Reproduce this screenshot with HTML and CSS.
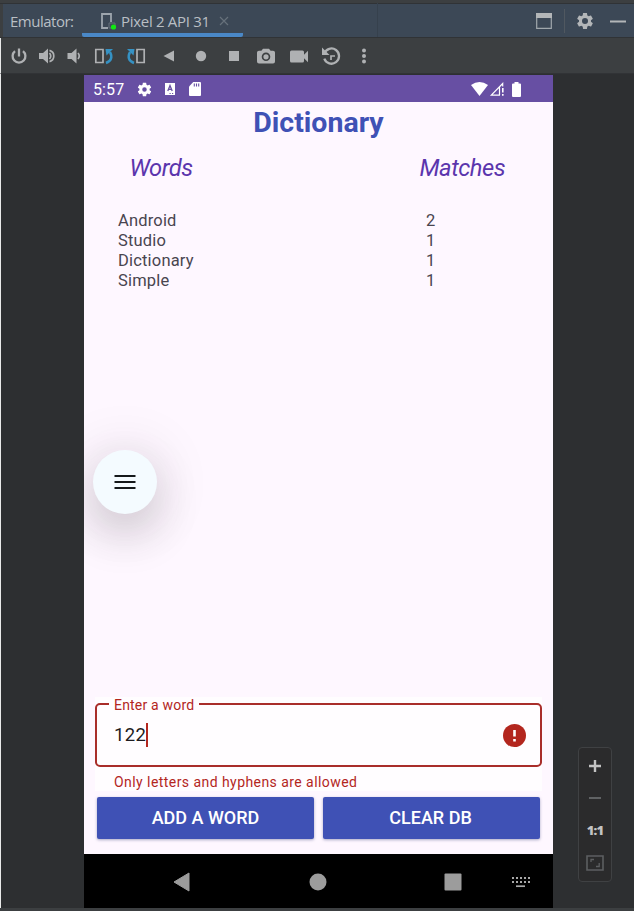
FILE: index.html
```html
<!DOCTYPE html>
<html lang="en">
<head>
<meta charset="utf-8">
<title>Emulator</title>
<link rel="stylesheet" href="styles.css">
</head>
<body>
<div class="window">
  <header class="tabbar">
    <span class="tool-name">Emulator:</span>
    <div class="tab">
      <svg class="device" width="17" height="18" viewBox="0 0 17 18"><path d="M8 16H2V2h9v8" fill="none" stroke="#9da5ad" stroke-width="1.800"/><path d="M9 11h6v5H9z" fill="none" stroke="#66717c"/><circle cx="13.500" cy="15" r="2.600" fill="#12e812"/></svg>
      <span class="tab-name">Pixel 2 API 31</span>
      <svg class="close" width="10" height="10" viewBox="0 0 10 10"><path d="m1 1 8 8M9 1 1 9" stroke="#66717b" stroke-width="1.200"/></svg>
    </div>
    <div class="tab-actions">
      <svg width="16" height="16" viewBox="0 0 16 16"><path d="M.7.700h14.600v14.600H.7z" fill="none" stroke="#a0a7ac" stroke-width="1.200"/><path d="M0 0h16v5H0z" fill="#b3b6b8"/></svg>
      <i class="divider"></i>
      <svg width="20" height="20" viewBox="0 0 24 24"><path fill="#b3b6b8" d="M19.140 12.940c.04-.3.060-.61.060-.94 0-.32-.02-.64-.07-.94l2.030-1.580c.18-.14.230-.41.120-.61l-1.920-3.320c-.12-.22-.37-.29-.59-.22l-2.390.960c-.5-.38-1.030-.7-1.620-.94L14.400 2.810c-.04-.24-.24-.41-.48-.41h-3.840c-.24 0-.43.170-.47.410L9.250 5.350c-.59.240-1.130.570-1.620.940l-2.390-.96c-.22-.08-.47 0-.59.220L2.740 8.870c-.12.210-.08.470.12.610l2.030 1.580c-.05.300-.09.630-.09.940s.02.640.07.940l-2.030 1.580c-.18.140-.23.410-.12.610l1.920 3.320c.12.220.370.290.590.220l2.390-.96c.5.380 1.030.7 1.620.94l.36 2.540c.05.240.24.410.480.410h3.840c.24 0 .44-.17.470-.41l.36-2.540c.59-.24 1.130-.56 1.620-.94l2.390.96c.22.080.470 0 .59-.22l1.920-3.320c.12-.22.070-.47-.12-.61zM12 15.600A3.600 3.600 0 1 1 12 8.400a3.600 3.600 0 0 1 0 7.200z"/></svg>
      <svg width="16" height="3" viewBox="0 0 16 3"><path d="M0 .5h16v2H0z" fill="#b3b6b8"/></svg>
    </div>
  </header>

  <nav class="toolbar">
    <svg width="18" height="18" viewBox="0 0 18 18"><path d="M5 4.200a6.400 6.400 0 1 0 8 0M9 1.500v8" class="line"/></svg>
    <svg width="18" height="18" viewBox="0 0 18 18"><path d="M1 6h4l5-4.500v15L5 12H1z"/><path d="M11.500 6q2.500 3 0 6M11.500 3.400a5.800 5.800 0 0 1 0 11.200" class="line thin"/></svg>
    <svg width="18" height="18" viewBox="0 0 18 18"><path d="M2.500 6h4l5-4.500v15l-5-4.500h-4z"/><path d="M13 6q2.500 3 0 6" class="line thin"/></svg>
    <svg width="20" height="18" viewBox="0 0 20 18"><path d="M1.800 2.500H9v13H1.800z" class="line thin"/><path d="M12 16c5.500-2 6.500-6 4-11" class="turn"/><path d="M11.500 2h7.500l-6.500 6.500z" class="turn-tip"/></svg>
    <svg width="20" height="18" viewBox="0 0 20 18"><path d="M11 2.500h7.200v13H11z" class="line thin"/><path d="M8 16c-5.500-2-6.500-6-4-11" class="turn"/><path d="M8.500 2H1l6.500 6.500z" class="turn-tip"/></svg>
    <svg width="18" height="18" viewBox="0 0 18 18"><path d="M14 3.500v11L3.500 9z"/></svg>
    <svg width="18" height="18" viewBox="0 0 18 18"><circle cx="9" cy="9" r="5.200"/></svg>
    <svg width="18" height="18" viewBox="0 0 18 18"><path d="M4 4h10v10H4z"/></svg>
    <svg width="18" height="18" viewBox="0 0 18 18"><path fill-rule="evenodd" d="M6 1.800h6l1.600 2H16q2 0 2 1.800v9q0 2-2 2H2q-2 0-2-2v-9Q0 3.800 2 3.800h2.400zM9 5.500a4.300 4.300 0 1 0 0 8.600 4.300 4.300 0 0 0 0-8.600z"/><circle cx="9" cy="9.800" r="2.600"/></svg>
    <svg width="18" height="18" viewBox="0 0 18 18"><path d="M1.500 3.500h11q1.500 0 1.500 1.500v2.700l4-4v11.500l-4-4V14q0 1.500-1.500 1.500h-11Q0 15.500 0 14V5q0-1.500 1.500-1.500z"/></svg>
    <svg width="20" height="18" viewBox="0 0 20 18"><path d="M3.300 6.500a7.600 7.600 0 1 1 0 5.200" class="line"/><path d="M1 .5V8h7.500z"/><path d="M14 9h-4v4" class="line thin"/></svg>
    <svg width="18" height="18" viewBox="0 0 18 18"><circle cx="9" cy="3.500" r="2"/><circle cx="9" cy="9" r="2"/><circle cx="9" cy="14.500" r="2"/></svg>
  </nav>

  <main class="stage">
    <section class="phone">
      <div class="status">
        <span class="clock">5:57</span>
        <svg width="17" height="17" viewBox="0 0 24 24"><path fill="#fff" d="M19.140 12.940c.04-.3.060-.61.060-.94 0-.32-.02-.64-.07-.94l2.030-1.580c.18-.14.230-.41.120-.61l-1.920-3.320c-.12-.22-.37-.29-.59-.22l-2.390.960c-.5-.38-1.030-.7-1.620-.94L14.400 2.810c-.04-.24-.24-.41-.48-.41h-3.840c-.24 0-.43.170-.47.410L9.250 5.350c-.59.240-1.130.570-1.620.940l-2.390-.96c-.22-.08-.47 0-.59.220L2.740 8.870c-.12.210-.08.470.12.610l2.030 1.580c-.05.300-.09.630-.09.940s.02.640.07.940l-2.030 1.580c-.18.140-.23.410-.12.610l1.920 3.320c.12.220.370.290.590.220l2.390-.96c.5.380 1.030.7 1.620.94l.36 2.540c.05.240.24.410.480.410h3.840c.24 0 .44-.17.470-.41l.36-2.540c.59-.24 1.130-.56 1.620-.94l2.390.96c.22.080.470 0 .59-.22l1.920-3.320c.12-.22.070-.47-.12-.61zM12 15.200A3.200 3.200 0 1 1 12 8.800a3.200 3.200 0 0 1 0 6.400z"/></svg>
        <svg class="badge-a" width="10" height="12" viewBox="0 0 10 12"><path fill="#fff" d="M0 0h10v12H0z"/><path d="M2.800 8 5 2.500 7.200 8M3.500 6.300h3" fill="none" stroke="#674fa3" stroke-width="1.300"/><path d="M4.500 10.500h1.200M7 10.500h1.200" stroke="#674fa3"/></svg>
        <svg class="sd" width="12" height="14" viewBox="0 0 12 14"><path fill="#fff" d="M4.300 0H11q1 0 1 1v12q0 1-1 1H1q-1 0-1-1V4.500z"/><path d="M5.300 1.500v3M7.500 1.500v3M9.700 1.500v3" stroke="#674fa3" stroke-width="1.100"/></svg>
        <div class="signals">
          <svg width="17" height="14" viewBox="0 0 17 14"><path d="M0 3Q8.500-3 17 3L8.500 14z" fill="#fff"/></svg>
          <svg width="14" height="14" viewBox="0 0 14 14"><path d="M10 13.200H1.300L12.700 1.500v3M9.500 5v8" fill="none" stroke="#fff" stroke-width="1.200"/><path d="M12.800 6v4.500M12.800 12v1.800" stroke="#fff" stroke-width="1.600"/></svg>
          <svg class="battery" width="9" height="15" viewBox="0 0 9 15"><path d="M2.500 0h4v1.500H8q1 0 1 1V14q0 1-1 1H1q-1 0-1-1V2.500q0-1 1-1h1.500z" fill="#fff"/></svg>
        </div>
      </div>

      <div class="app">
        <h1>Dictionary</h1>
        <div class="heads"><h2>Words</h2><h2>Matches</h2></div>
        <div class="rows">
          <span>Android</span><span>2</span>
          <span>Studio</span><span>1</span>
          <span>Dictionary</span><span>1</span>
          <span>Simple</span><span>1</span>
        </div>
        <div class="menu-area">
          <div class="fab"><svg width="22" height="16" viewBox="0 0 22 16"><path d="M.5 2h21M.5 8h21M.5 14h21" stroke="#15191b" stroke-width="2.200"/></svg></div>
        </div>
        <div class="field-block">
          <fieldset class="field">
            <legend>Enter a word</legend>
            <span class="value">122</span><i class="caret"></i>
            <svg class="error-icon" width="23" height="23" viewBox="0 0 23 23"><circle cx="11.500" cy="11.500" r="11.500" fill="#b3261e"/><path d="M11.500 6v6.500M11.500 15v2.500" stroke="#fff" stroke-width="2.600"/></svg>
          </fieldset>
          <p class="helper">Only letters and hyphens are allowed</p>
        </div>
        <div class="buttons"><button>ADD A WORD</button><button>CLEAR DB</button></div>
      </div>

      <div class="navbar">
        <svg width="18" height="20" viewBox="0 0 18 20"><path d="M16 1v18L1 10z" fill="#9c9c9c" stroke="#9c9c9c" stroke-linejoin="round"/></svg>
        <svg width="18" height="18" viewBox="0 0 18 18"><circle cx="9" cy="9" r="8.500" fill="#9c9c9c"/></svg>
        <svg width="18" height="18" viewBox="0 0 18 18"><rect x=".5" y=".5" width="17" height="17" rx="1" fill="#9c9c9c"/></svg>
        <svg width="18" height="12" viewBox="0 0 18 12"><path d="M0 2h18M0 6h18" stroke="#a8a8a8" stroke-width="2" stroke-dasharray="2 2"/><path d="M4 10.200h9" stroke="#a8a8a8" stroke-width="1.700"/></svg>
      </div>
    </section>

    <aside class="zoom">
      <svg width="14" height="14" viewBox="0 0 14 14"><path d="M7 1v12M1 7h12" stroke="#c3c3c3" stroke-width="2.400"/></svg>
      <svg width="14" height="4" viewBox="0 0 14 4"><path d="M1 2h12" stroke="#606264" stroke-width="2"/></svg>
      <span>1:1</span>
      <svg width="18" height="16" viewBox="0 0 18 16"><path d="M1 1h16v14H1z" fill="none" stroke="#5d5f61" stroke-width="1.600"/><path d="M5 7V4.500h3M10 11.500h3.200V8" fill="none" stroke="#5d5f61" stroke-width="1.300"/></svg>
    </aside>
  </main>
  <footer class="bottom"></footer>
</div>
</body>
</html>
```
FILE: styles.css
```css
* { box-sizing: border-box; }
body { margin: 0; font-family: Roboto, "Liberation Sans", sans-serif; }
svg { display: block; flex: none; overflow: visible; }
h1, h2, p { margin: 0; }

.window {
  width: 634px;
  height: 911px;
  display: grid;
  grid-template-rows: 38px 36px 834px 3px;
  background: #3c3f41;
}

.tabbar {
  display: flex;
  border-top: 3px solid #3c3f41;
  border-bottom: 1px solid #303336;
  box-shadow: inset 0 1px #303336, inset 3px 0 #3c3f41;
  background: #3c4856;
  color: #b9bfc4;
  font: 15px/36px "Open Sans", "Noto Sans", sans-serif;
}
.tool-name { width: 72px; padding-left: 10px; white-space: nowrap; letter-spacing: -.5px; }
.tab {
  display: flex;
  align-items: center;
  width: 161px;
  margin-left: 10px;
  padding: 5px 0 0 18px;
  border-bottom: 4px solid #4a88c7;
  border-radius: 2px;
  line-height: 30px;
}
.tab-name { width: 89px; margin-left: 4px; white-space: nowrap; letter-spacing: -.3px; }
.close { margin-left: 9px; }
.tab-actions {
  display: flex;
  align-items: center;
  flex: 1;
  justify-content: flex-end;
  margin-left: 134px;
  padding: 2px 8px 0 0;
  border-left: 1px solid #36414d;
}
.divider { width: 1px; height: 24px; margin: 0 10px 0 12px; background: #505860; }
.tab-actions svg:last-child { margin-left: 15px; }

.toolbar {
  display: grid;
  grid-template-columns: 28px 27px 28px 32px 32px 34px 30px 36px 28px 38px 26px 40px;
  place-items: center;
  padding-left: 4px;
  border-left: 1px solid #e9eaea;
  border-bottom: 1px solid #313336;
  fill: #afb1b3;
}
.line { fill: none; stroke: #afb1b3; stroke-width: 2.300; }
.thin { stroke-width: 1.700; }
.turn { fill: none; stroke: #3592c4; stroke-width: 2.500; }
.turn-tip { fill: #3592c4; }

.stage {
  display: flex;
  align-items: flex-start;
  padding: 1px 0 0 83px;
  border-left: 1px solid #e9eaea;
  background: #2d2f31;
}
.phone { width: 469px; height: 833px; display: grid; grid-template-rows: 27px 752px 54px; }
.status { display: flex; align-items: center; padding: 1px 32px 0 9px; background: #674fa3; color: #fff; }
.clock { width: 43px; font-size: 16px; letter-spacing: .1px; }
.badge-a { margin-left: 12px; }
.sd { margin-left: 14px; }
.signals { display: flex; align-items: center; margin-left: auto; }
.signals svg + svg { margin-left: 2px; }
.signals .battery { margin-left: 8px; }

.app { display: flex; flex-direction: column; overflow: hidden; background: #fef7ff; }
h1 { height: 42px; text-align: center; color: #3f51b5; font: 700 28.500px/42px Roboto, sans-serif; }
.heads { display: grid; grid-template-columns: 290px 1fr; height: 67px; padding: 8px 0 0 45.500px; }
h2 { color: #5b35ad; font: italic 400 23.700px/33px Roboto, sans-serif; letter-spacing: -.45px; }
.rows { display: grid; grid-template-columns: 308px 1fr; padding-left: 34px; color: #49454f; font-size: 16.500px; line-height: 20px; letter-spacing: .18px; }
.menu-area { flex: 1; padding: 159px 0 0 9px; }
.fab {
  display: grid;
  place-items: center;
  width: 64px;
  height: 64px;
  border-radius: 50%;
  background: #f4fbff;
  box-shadow: 0 20px 46px rgba(45, 38, 45, .2), 0 2px 60px rgba(60, 35, 60, .14);
}

.field-block { width: 447px; height: 94px; margin: 0 11px 6px; background: #fffdff; }
.field {
  display: flex;
  align-items: center;
  width: 447px;
  height: 70px;
  margin: 0;
  padding: 0 14px 6px 17px;
  border: 2px solid #a92d2a;
  border-radius: 5px;
}
legend { height: 14px; margin-left: -5px; padding: 0 5px; color: #b3261e; font-size: 14px; line-height: 16px; letter-spacing: .2px; }
.value { color: #1d1b20; font-size: 18.500px; letter-spacing: .3px; }
.caret { width: 2px; height: 24px; background: #b3261e; }
.error-icon { margin-left: auto; }
.helper { padding: 7px 0 0 19px; color: #b3261e; font-size: 14px; line-height: 16px; letter-spacing: .44px; }
.buttons { display: grid; grid-template-columns: 217px 217px; gap: 9px; height: 57px; padding-left: 13px; }
button {
  height: 42px;
  padding: 0;
  border: 0;
  border-radius: 2px;
  background: #3f51b5;
  box-shadow: 0 1px 3px rgba(40, 50, 110, .4);
  color: #fff;
  font: 500 18px/42px Roboto, sans-serif;
}
button:last-child { padding-right: 2px; }

.navbar {
  display: grid;
  grid-template-columns: 136.500px 135px 68px 18px;
  align-items: center;
  justify-items: start;
  padding: 1px 0 0 88.500px;
  background: #000;
}

.zoom {
  display: flex;
  flex-direction: column;
  align-items: center;
  width: 34px;
  height: 135px;
  margin: 672px 0 0 25px;
  padding-top: 11px;
  border: 1px solid #3f4143;
  border-radius: 4px;
  background: #2b2b2c;
}
.zoom svg:nth-child(2) { margin-top: 23px; }
.zoom span { margin-top: 21px; color: #c3c3c3; font: 800 13px/18px "Open Sans", sans-serif; letter-spacing: -.8px; }
.zoom svg:last-child { margin-top: 16px; }
.bottom { border-top: 1px solid #3c3f41; background: #3c3f41; }
```
